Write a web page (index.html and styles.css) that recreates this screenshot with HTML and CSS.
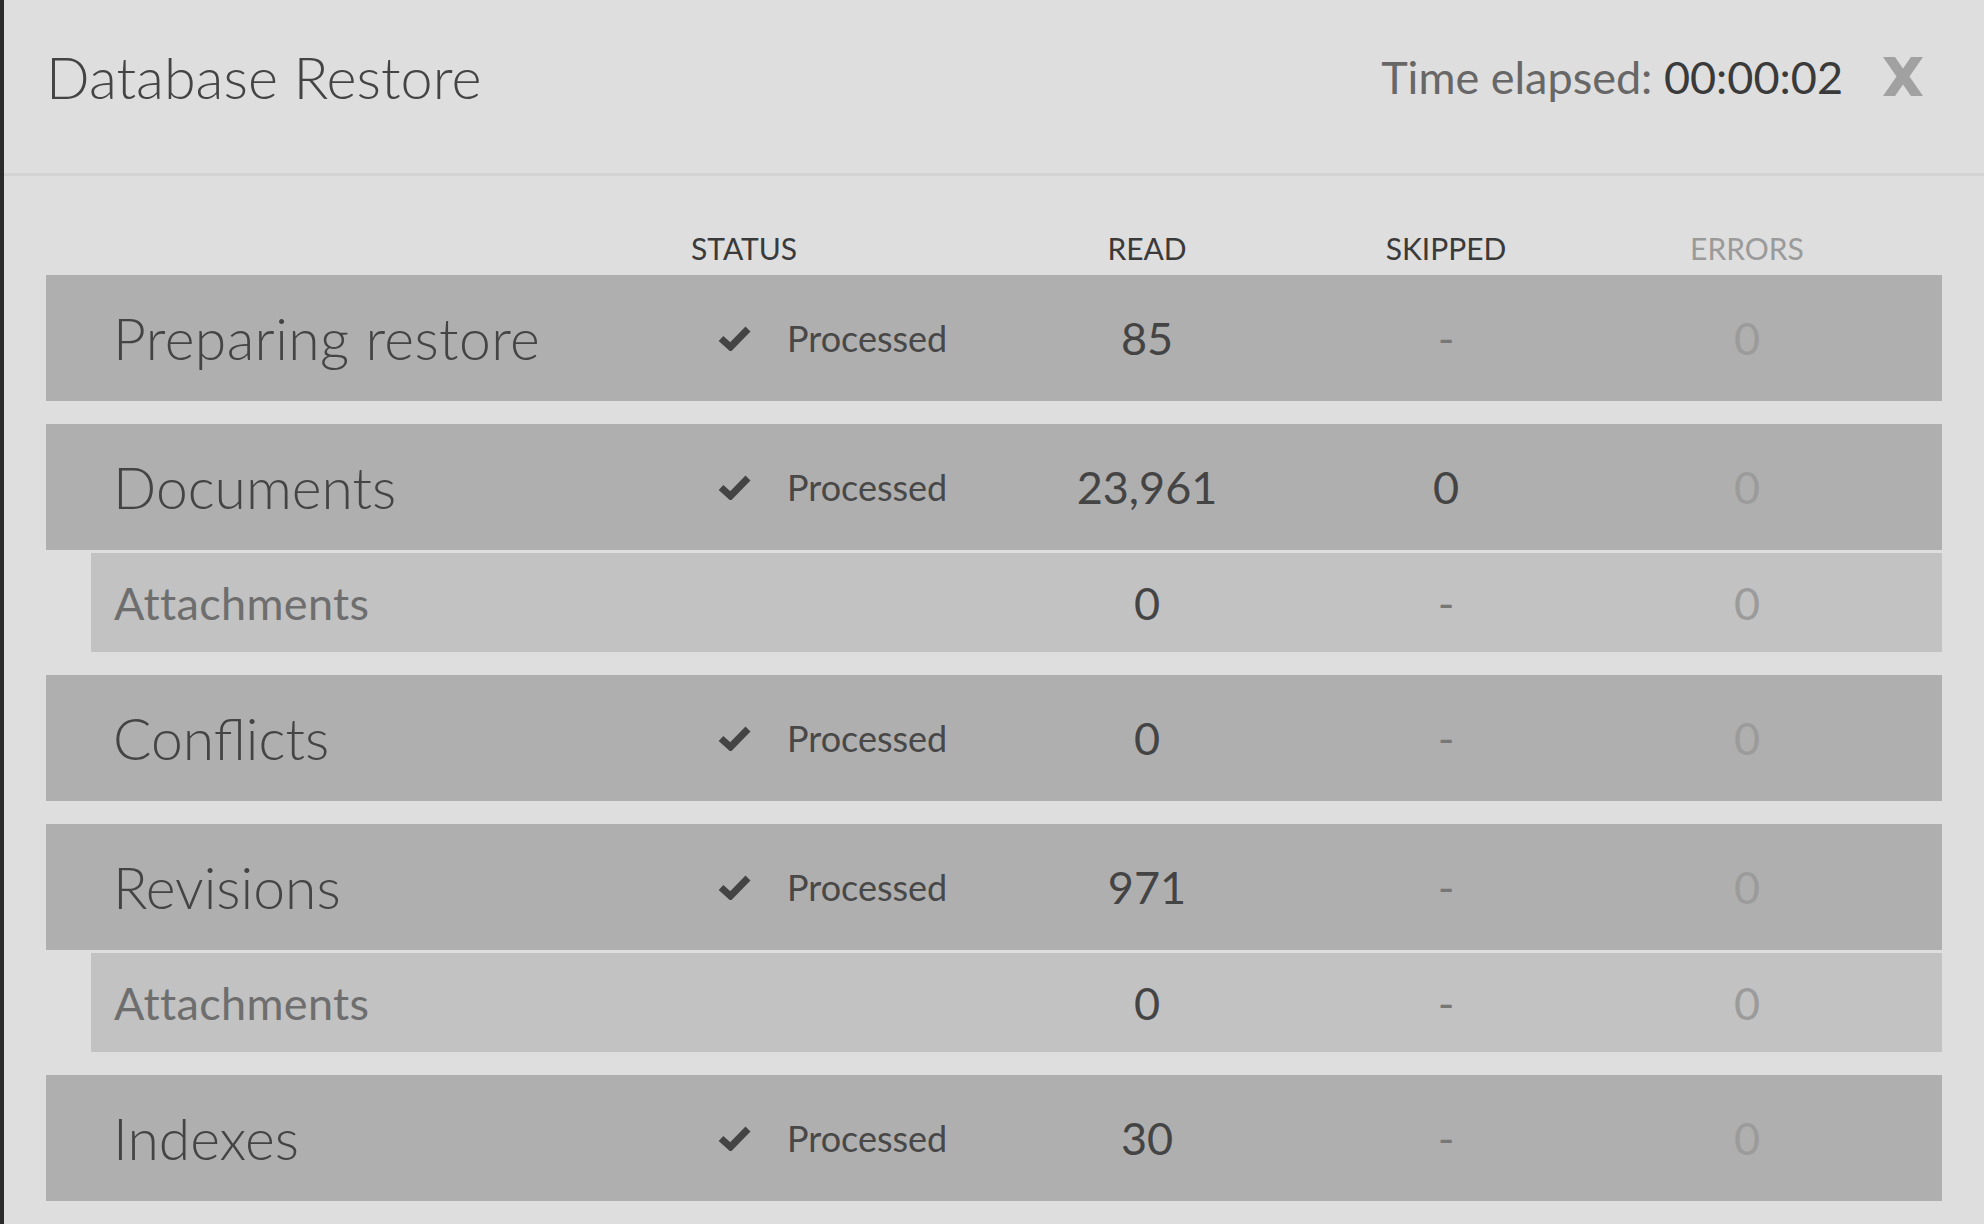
FILE: index.html
```html
<!DOCTYPE html>
<html lang="en">
<head>
<meta charset="utf-8">
<title>Database Restore</title>
<link rel="stylesheet" href="styles.css">
</head>
<body>
<div class="dialog">
  <header class="dlg-header">
    <h1 class="title">Database Restore</h1>
    <div class="elapsed"><span class="el-label">Time elapsed:</span> <span class="el-value">00:00:02</span></div>
    <button class="close" type="button" aria-label="Close">
      <svg width="40" height="39" viewBox="0 0 40 39"><path d="M0 0 H12 L20 11.5 L28 0 H40 L26.5 19.5 L40 39 H28 L20 27.5 L12 39 H0 L13.5 19.5 Z" fill="#a1a1a1"/></svg>
    </button>
  </header>
  <div class="dlg-body">
    <div class="cols-head">
      <div></div>
      <div class="h-status">STATUS</div>
      <div class="h-num">READ</div>
      <div class="h-num">SKIPPED</div>
      <div class="h-num h-errors">ERRORS</div>
    </div>

    <div class="group">
      <div class="row">
        <div class="name name-wide">Preparing restore</div>
        <div class="status"><svg class="check" width="33" height="26" viewBox="0 0 33 26"><polyline points="3,13.5 12.5,22 30,4" fill="none" stroke="#444" stroke-width="7"/></svg><span>Processed</span></div>
        <div class="num">85</div>
        <div class="num dash">-</div>
        <div class="num err">0</div>
      </div>
    </div>

    <div class="group">
      <div class="row">
        <div class="name">Documents</div>
        <div class="status"><svg class="check" width="33" height="26" viewBox="0 0 33 26"><polyline points="3,13.5 12.5,22 30,4" fill="none" stroke="#444" stroke-width="7"/></svg><span>Processed</span></div>
        <div class="num">23,961</div>
        <div class="num">0</div>
        <div class="num err">0</div>
      </div>
      <div class="row sub">
        <div class="name">Attachments</div>
        <div class="status"></div>
        <div class="num">0</div>
        <div class="num dash">-</div>
        <div class="num err">0</div>
      </div>
    </div>

    <div class="group">
      <div class="row">
        <div class="name">Conflicts</div>
        <div class="status"><svg class="check" width="33" height="26" viewBox="0 0 33 26"><polyline points="3,13.5 12.5,22 30,4" fill="none" stroke="#444" stroke-width="7"/></svg><span>Processed</span></div>
        <div class="num">0</div>
        <div class="num dash">-</div>
        <div class="num err">0</div>
      </div>
    </div>

    <div class="group">
      <div class="row">
        <div class="name">Revisions</div>
        <div class="status"><svg class="check" width="33" height="26" viewBox="0 0 33 26"><polyline points="3,13.5 12.5,22 30,4" fill="none" stroke="#444" stroke-width="7"/></svg><span>Processed</span></div>
        <div class="num">971</div>
        <div class="num dash">-</div>
        <div class="num err">0</div>
      </div>
      <div class="row sub">
        <div class="name">Attachments</div>
        <div class="status"></div>
        <div class="num">0</div>
        <div class="num dash">-</div>
        <div class="num err">0</div>
      </div>
    </div>

    <div class="group">
      <div class="row">
        <div class="name">Indexes</div>
        <div class="status"><svg class="check" width="33" height="26" viewBox="0 0 33 26"><polyline points="3,13.5 12.5,22 30,4" fill="none" stroke="#444" stroke-width="7"/></svg><span>Processed</span></div>
        <div class="num">30</div>
        <div class="num dash">-</div>
        <div class="num err">0</div>
      </div>
    </div>
  </div>
</div>
</body>
</html>
```

FILE: styles.css
```css
html, body {
  margin: 0;
  padding: 0;
  height: 100%;
}
body {
  background: #dedede;
  font-family: Lato, "Open Sans", "Liberation Sans", sans-serif;
  color: #444;
  overflow: hidden;
}
.dialog {
  min-height: 100%;
  border-left: 4px solid #2b2b2b;
  box-sizing: border-box;
  background: #dedede;
}
.dlg-header {
  display: flex;
  align-items: center;
  height: 176px;
  box-sizing: border-box;
  padding: 0 61px 20px 42px;
  border-bottom: 3px solid #d3d3d3;
}
.title {
  margin: 0;
  font-weight: 300;
  font-size: 57.5px;
  color: #444;
  flex: 1;
}
.elapsed {
  font-size: 45px;
  font-weight: 400;
}
.el-label {
  color: #676767;
}
.el-value {
  color: #3a3a3a;
}
.close {
  margin-left: 40px;
  padding: 0;
  border: 0;
  background: none;
  width: 40px;
  height: 39px;
  display: block;
}
.close svg {
  display: block;
}
.dlg-body {
  padding: 54px 42px 0 42px;
}
.cols-head {
  display: grid;
  grid-template-columns: 645px 310px 292px 306px 296px 1fr;
  font-size: 30px;
  line-height: 36px;
  color: #3a3a3a;
  margin-bottom: 9px;
}
.h-status {
  text-align: left;
}
.h-num {
  text-align: center;
}
.h-errors {
  color: #9a9a9a;
}
.group {
  display: flex;
  flex-direction: column;
  gap: 3px;
  margin-bottom: 23px;
}
.row {
  display: grid;
  grid-template-columns: 645px 310px 292px 306px 296px 1fr;
  align-items: center;
  height: 126px;
  background: #afafaf;
}
.row .name {
  padding-left: 67px;
  font-size: 57px;
  font-weight: 300;
  color: #444;
  white-space: nowrap;
}
.row .name-wide {
  letter-spacing: 0.4px;
}
.row.sub {
  margin-left: 45px;
  height: 99px;
  grid-template-columns: 600px 310px 292px 306px 296px 1fr;
  background: #c2c2c2;
}
.row.sub .name {
  padding-left: 23px;
  font-size: 45px;
  font-weight: 400;
  color: #6e6e6e;
  letter-spacing: 0.35px;
}
.status {
  display: flex;
  align-items: center;
  padding-left: 27px;
  font-size: 36px;
  color: #484848;
}
.check {
  display: block;
  margin-right: 36px;
}
.num {
  text-align: center;
  font-size: 45px;
  color: #444;
}
.num.dash {
  color: #777;
}
.num.err {
  color: #9b9b9b;
}
```
